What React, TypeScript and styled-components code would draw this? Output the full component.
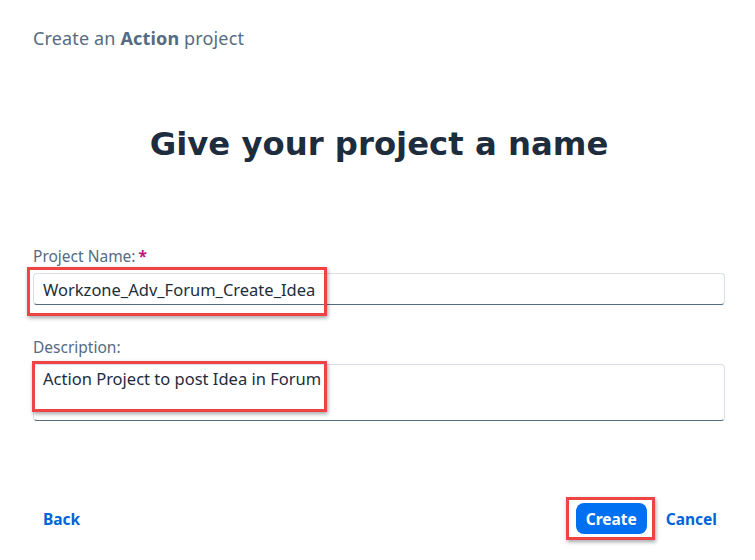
import styled, { createGlobalStyle } from "styled-components";

const GlobalStyle = createGlobalStyle`
  html, body {
    margin: 0;
    padding: 0;
    background: #ffffff;
  }
  body {
    font-family: "Noto Sans", "Liberation Sans", Arial, sans-serif;
    color: #1d2d3e;
  }
`;

type MarkProps = {
  $top: number
  $left: number
  $width: number
  $height: number
}

export default function App() {
  return (
    <>
      <GlobalStyle />
      <Page>
        <Crumb>
          Create an <strong>Action</strong> project
        </Crumb>
        <Heading>Give your project a name</Heading>
        <Form>
          <Field>
            <Label>
              Project Name:<Required>*</Required>
            </Label>
            <Control>
              <TextInput readOnly value="Workzone_Adv_Forum_Create_Idea" />
              <Mark $top={-6} $left={-6} $width={300} $height={49} />
            </Control>
          </Field>
          <Field>
            <Label>Description:</Label>
            <Control>
              <TextArea readOnly value="Action Project to post Idea in Forum" />
              <Mark $top={-3} $left={-1} $width={295} $height={51} />
            </Control>
          </Field>
        </Form>
        <Footer>
          <LinkButton>Back</LinkButton>
          <Actions>
            <Control>
              <PrimaryButton>Create</PrimaryButton>
              <Mark $top={-6} $left={-10} $width={89} $height={43} />
            </Control>
            <LinkButton>Cancel</LinkButton>
          </Actions>
        </Footer>
      </Page>
    </>
  )
}

const Page = styled.main`
  width: 755px;
  height: 560px;
  box-sizing: border-box;
  padding: 27px 30px 0 33px;
  display: flex;
  flex-direction: column;
`;

const Crumb = styled.div`
  font-size: 18px;
  line-height: 22px;
  letter-spacing: 0.15px;
  color: #556b82;

  strong {
    font-weight: 700;
  }
`;

const Heading = styled.h1`
  margin: 75px 0 0;
  text-align: center;
  font-family: "DejaVu Sans", "Noto Sans", sans-serif;
  font-size: 32.3px;
  font-weight: 700;
  line-height: 40px;
  color: #1d2d3e;
`;

const Form = styled.div`
  margin-top: 83px;
  display: flex;
  flex-direction: column;
  gap: 33px;
`;

const Field = styled.div`
  display: flex;
  flex-direction: column;
  gap: 8px;
`;

const Label = styled.label`
  font-size: 15.5px;
  line-height: 18px;
  color: #556b82;
`;

const Required = styled.span`
  color: #b8157a;
  margin-left: 3px;
  font-weight: 700;
`;

const Control = styled.div`
  position: relative;
`;

const TextInput = styled.input`
  box-sizing: border-box;
  display: block;
  width: 692px;
  height: 32px;
  padding: 0 9px;
  border: 1px solid #d9dfe5;
  border-bottom: 1px solid #556b82;
  border-radius: 4px;
  font-family: inherit;
  font-size: 16.5px;
  color: #1d2d3e;
  background: #fff;
  outline: none;
`;

const TextArea = styled.textarea`
  box-sizing: border-box;
  display: block;
  width: 692px;
  height: 57px;
  padding: 3px 9px;
  border: 1px solid #d9dfe5;
  border-bottom: 1px solid #556b82;
  border-radius: 4px;
  font-family: inherit;
  font-size: 16.5px;
  line-height: 22px;
  color: #1d2d3e;
  resize: none;
  outline: none;
`;

const Mark = styled.span<MarkProps>`
  position: absolute;
  top: ${(p) => p.$top}px;
  left: ${(p) => p.$left}px;
  width: ${(p) => p.$width}px;
  height: ${(p) => p.$height}px;
  box-sizing: border-box;
  border: 3px solid #ef4444;
  box-shadow: 1px 2px 4px rgba(0, 0, 0, 0.35);
  pointer-events: none;
`;

const Footer = styled.div`
  margin-top: auto;
  margin-bottom: 26px;
  display: flex;
  align-items: center;
  justify-content: space-between;
  padding: 0 8px 0 10px;
`;

const Actions = styled.div`
  display: flex;
  align-items: center;
  gap: 19px;
`;

const LinkButton = styled.button`
  border: none;
  background: none;
  padding: 0;
  font-family: inherit;
  font-size: 15.5px;
  font-weight: 700;
  color: #0064d9;
  cursor: pointer;
`;

const PrimaryButton = styled.button`
  display: block;
  height: 31px;
  padding: 0 10px;
  border: none;
  border-radius: 8px;
  background: #0070f2;
  color: #fff;
  font-family: inherit;
  font-size: 15.5px;
  font-weight: 700;
  cursor: pointer;
`;
